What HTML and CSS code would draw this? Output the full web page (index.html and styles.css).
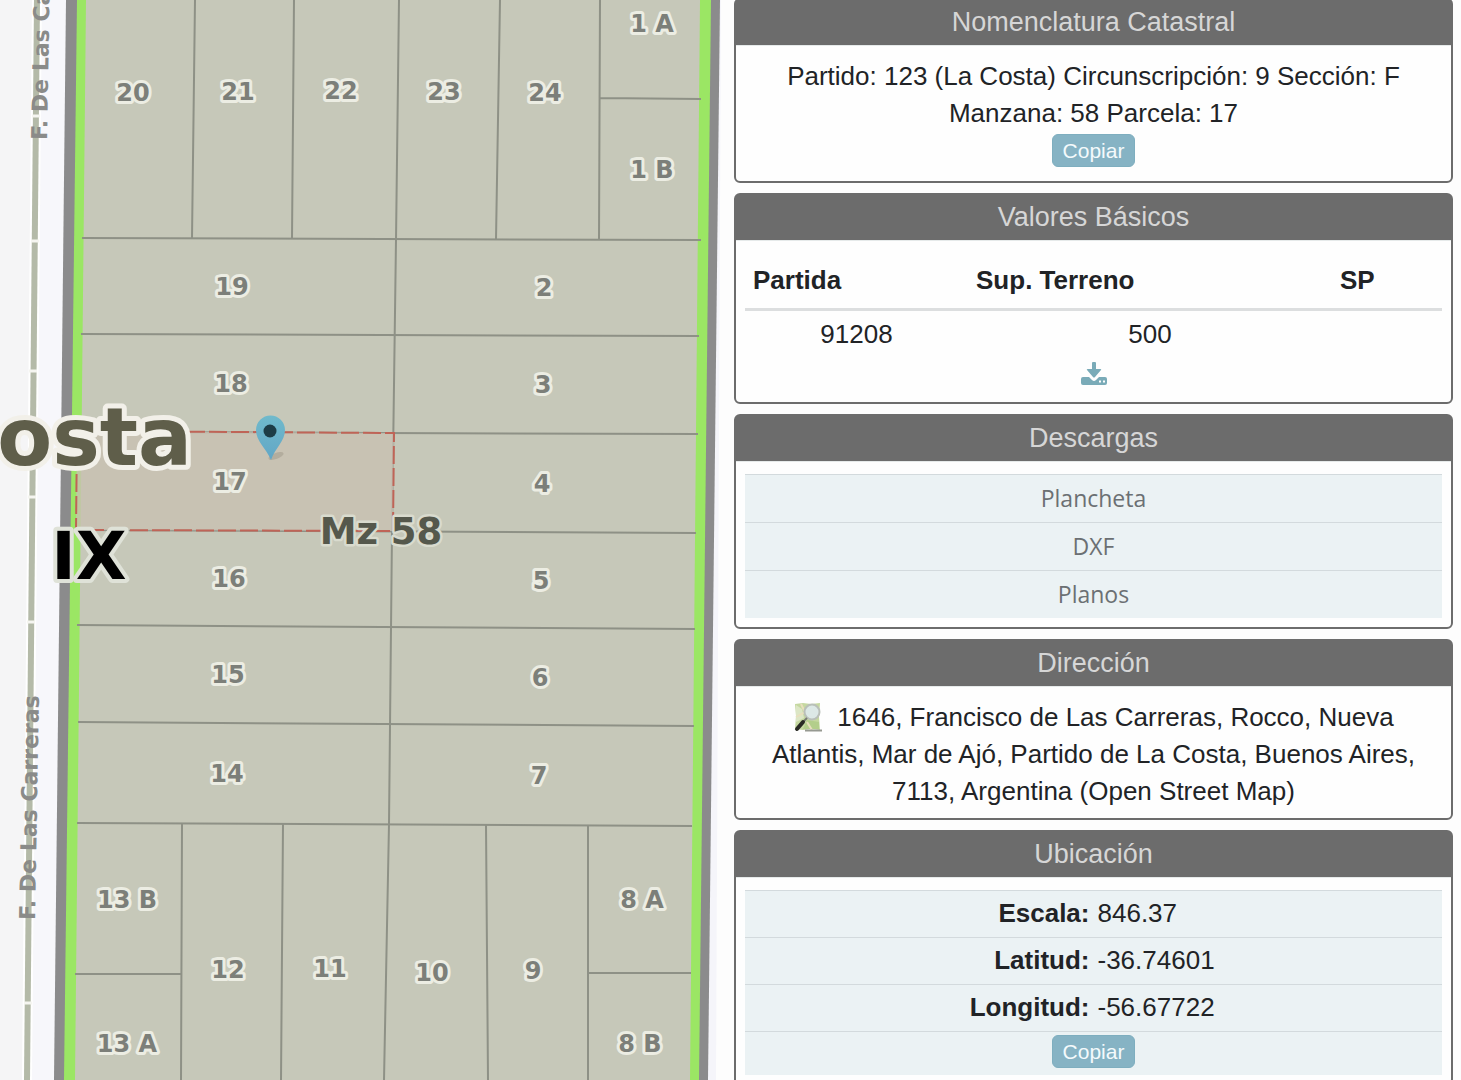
FILE: index.html
```html
<!DOCTYPE html>
<html lang="es">
<head>
<meta charset="utf-8">
<meta name="viewport" content="width=device-width, initial-scale=1">
<title>Carto - Parcela 17</title>
<link rel="stylesheet" href="styles.css">
</head>
<body>
<div class="layout">
  <main class="map">
    <svg class="map-canvas" viewBox="0 0 725 1080" preserveAspectRatio="xMinYMin slice" role="img" aria-label="Mapa catastral de la manzana 58">
      <rect width="725" height="1080" fill="#f5f5f6"/>
      <path d="M42 0H66L54 1080H32Z" fill="#f7f7fb"/>
      <path d="M719 0H725V1080H707Z" fill="#f5f5fa"/>
      <path d="M721 0H725V1080H716Z" fill="#fdfdfd"/>
      <!-- street axis -->
      <path d="M37 0L27 1080" stroke="#fff" stroke-width="10"/>
      <path d="M37 0L27 1080" stroke="#b4baa8" stroke-width="6"/>
      <path class="ticks" d="M32 116h8M31 241h8M29 371h8M28 497h8M27 622h8M24 1003h8"/>
      <!-- block -->
      <path d="M66 0H720L708 1080H54Z" fill="#8b8b8c"/>
      <path d="M77 0H711L699 1080H64Z" fill="#9be664"/>
      <path d="M86 0H700L690 1080H75Z" fill="#c6c8b9"/>
      <g class="parcel-lines">
        <path d="M82 238L701 240M81 334L699 336M79 432L698 434M77 530L696 533M77 625L695 629M78 722L694 726M77 823L692 826"/>
        <path d="M399 0L396 240L392 531L389 824L384 1080"/>
        <path d="M195 0L192 238M294 0L292 238M500 0L496 239M600 0L599 239M600 98L701 99"/>
        <path d="M182 824L181 1080M283 824L281 1080M486 825L488 1080M588 825L588 1080M75 974H182M588 973H691"/>
      </g>
      <path class="selected" d="M77 431L394 433L393 531L76 530Z"/>
      <g class="street">
        <text transform="translate(35 920) rotate(-89)">F. De Las Carreras</text>
        <text transform="translate(47 140) rotate(-89)">F. De Las Carreras</text>
      </g>
      <g class="parcel">
        <text x="133" y="101">20</text><text x="238" y="100">21</text><text x="341" y="99">22</text><text x="444" y="100">23</text><text x="545" y="101">24</text>
        <text x="652" y="32">1 A</text><text x="652" y="178">1 B</text>
        <text x="232" y="295">19</text><text x="544" y="296">2</text>
        <text x="231" y="392">18</text><text x="543" y="393">3</text>
        <text x="230" y="490">17</text><text x="542" y="492">4</text>
        <text x="229" y="587">16</text><text x="541" y="589">5</text>
        <text x="228" y="683">15</text><text x="540" y="686">6</text>
        <text x="227" y="782">14</text><text x="539" y="784">7</text>
        <text x="127" y="908">13 B</text><text x="127" y="1052">13 A</text>
        <text x="228" y="978">12</text><text x="330" y="977">11</text><text x="432" y="981">10</text><text x="533" y="979">9</text>
        <text x="642" y="908">8 A</text><text x="640" y="1052">8 B</text>
      </g>
      <text class="block-name" x="381" y="544">Mz 58</text>
      <text class="district" x="192" y="465">osta</text>
      <text class="section" x="89" y="579">IX</text>
      <defs>
        <linearGradient id="pin" x1="0" y1="0" x2="0" y2="1"><stop offset="0" stop-color="#70bacb"/><stop offset="1" stop-color="#62a6c6"/></linearGradient>
      </defs>
      <ellipse cx="276" cy="456" rx="8" ry="3" fill="#a59e90" opacity=".6" transform="rotate(-20 276 456)"/>
      <path d="M271 460C266 448 256 441 256 430A14.500 14.500 0 0 1 285 430C285 441 275 448 271 460Z" fill="url(#pin)"/>
      <circle cx="270" cy="431" r="6.500" fill="#1d3c46"/>
    </svg>
  </main>
  <aside class="info">
    <section class="card">
      <h2 class="card-title">Nomenclatura Catastral</h2>
      <div class="card-body">
        <p class="text">Partido: 123 (La Costa) Circunscripción: 9 Sección: F Manzana: 58 Parcela: 17</p>
        <button class="copy" type="button">Copiar</button>
      </div>
    </section>
    <section class="card">
      <h2 class="card-title">Valores Básicos</h2>
      <div class="card-body">
        <table class="values">
          <thead><tr><th class="col-id" scope="col">Partida</th><th scope="col">Sup. Terreno</th><th class="col-sp" scope="col">SP</th></tr></thead>
          <tbody><tr><td>91208</td><td>500</td><td></td></tr></tbody>
        </table>
        <a class="download" href="#" aria-label="Descargar">
          <svg width="26" height="24" viewBox="0 0 26 24"><path d="M11 1q0-1 1-1h2q1 0 1 1v6h4q2 0 1 1l-6 7q-1 1-2 0L6 8q-1-1 1-1h4Z"/><path fill-rule="evenodd" d="M2 15h6l3 3q2 2 4 0l3-3h6q2 0 2 2v4q0 2-2 2H2q-2 0-2-2v-4q0-2 2-2ZM18 18.500v2h2v-2ZM22 18.500v2h2v-2Z"/></svg>
        </a>
      </div>
    </section>
    <section class="card">
      <h2 class="card-title">Descargas</h2>
      <div class="card-body">
        <ul class="downloads">
          <li><a href="#">Plancheta</a></li>
          <li><a href="#">DXF</a></li>
          <li><a href="#">Planos</a></li>
        </ul>
      </div>
    </section>
    <section class="card">
      <h2 class="card-title">Dirección</h2>
      <div class="card-body">
        <p class="text"><svg class="osm" width="30" height="30" viewBox="0 0 30 30" aria-hidden="true"><path d="M2 2l8-1 8 1 9-1-1 14 1 13-9-1-8 1-8-1 1-13Z" fill="#c5d8a0"/><path d="M3 3l6 4 2 9-8 4Z" fill="#dce6c5"/><path d="M10 27l4-9 12 2v7Z" fill="#b3ce8b"/><path d="M8 2l4 8-9 5M14 20l5 8" stroke="#e8dfbd" stroke-width="2" fill="none"/><path d="M12 28.500h17" stroke="#969991" stroke-width="2"/><circle cx="19" cy="10" r="7.500" fill="#dce8e6" stroke="#b9bfb9" stroke-width="2"/><path d="M14 16l-4 4" stroke="#777a72" stroke-width="2"/><path d="M10 20l-6 7" stroke="#292a24" stroke-width="4" stroke-linecap="round"/></svg>1646, Francisco de Las Carreras, Rocco, Nueva Atlantis, Mar de Ajó, Partido de La Costa, Buenos Aires, 7113, Argentina (Open Street Map)</p>
      </div>
    </section>
    <section class="card">
      <h2 class="card-title">Ubicación</h2>
      <div class="card-body">
        <dl class="location">
          <div class="pair"><dt>Escala:</dt><dd>846.37</dd></div>
          <div class="pair"><dt>Latitud:</dt><dd>-36.74601</dd></div>
          <div class="pair"><dt>Longitud:</dt><dd>-56.67722</dd></div>
        </dl>
        <div class="location-action"><button class="copy" type="button">Copiar</button></div>
      </div>
    </section>
  </aside>
</div>
</body>
</html>
```
FILE: styles.css
```css
* { box-sizing: border-box; }
body {
  margin: 0;
  background: #fdfdfd;
  color: #212326;
  font: 26px/37px "Liberation Sans", Arial, sans-serif;
}
.layout {
  display: grid;
  grid-template-columns: minmax(0, 725fr) minmax(0, 736fr);
  height: 100vh;
  overflow: hidden;
}
.map { min-width: 0; overflow: hidden; }
.map-canvas { display: block; width: 100%; height: 100%; }
.map-canvas text {
  font-family: "DejaVu Sans", sans-serif;
  font-weight: bold;
  paint-order: stroke;
  stroke-linejoin: round;
}
.ticks { stroke: #f5f5f0; stroke-width: 3; }
.parcel-lines { fill: none; stroke: #8e9186; stroke-width: 2; }
.selected {
  fill: #c8c0b1;
  fill-opacity: .8;
  stroke: #bf6457;
  stroke-width: 2;
  stroke-dasharray: 18 4;
}
.parcel { font-size: 24px; fill: #7c7f79; stroke: #ecede3; stroke-width: 6px; text-anchor: middle; }
.street { font-size: 22px; fill: #8a8b89; }
.block-name { font-size: 37px; fill: #55584c; stroke: #d9dbce; stroke-width: 5px; text-anchor: middle; }
.district { font-size: 80px; fill: #5f5e4a; stroke: #f2f0e9; stroke-width: 10px; text-anchor: end; }
.section { font-size: 66px; fill: #000; stroke: #dfe2d8; stroke-width: 8px; text-anchor: middle; }

.info {
  display: flex;
  flex-direction: column;
  gap: 10px;
  margin-top: -2px;
  padding: 0 8px 0 9px;
  overflow: hidden;
}
.card {
  flex: none;
  border: 2px solid #6c6c6c;
  border-radius: 6px;
  background: #fefefe;
  text-align: center;
}
.card-title {
  margin: 0;
  padding: 4px 0;
  border-bottom: 1px solid #e6eaea;
  background: #6c6c6c;
  color: #d6d6d6;
  font-size: 27px;
  font-weight: normal;
}
.card-body { padding: 12px 9px 8px; }
.text { margin: 0 8px; }
.copy {
  display: block;
  margin: 2px auto 6px;
  padding: 0 10px;
  border: 1px solid #7eaebf;
  border-radius: 6px;
  background: #86b3c4;
  color: #f4fafc;
  font: 21px/31px "Liberation Sans", Arial, sans-serif;
}
.values { width: 100%; border-collapse: collapse; table-layout: fixed; }
.values th { padding: 9px 8px; border-bottom: 3px solid #dcdedf; text-align: left; }
.values td { padding: 5px 8px 0; }
.col-id { width: 32%; }
.col-sp { width: 110px; }
.download { display: block; height: 41px; padding-top: 9px; }
.download svg { display: block; margin: 0 auto; fill: #7aabb8; }
.downloads { margin: 0; padding: 0 0 1px; list-style: none; }
.downloads li { border-top: 1px solid #d3dadd; background: #ebf2f4; }
.downloads a {
  display: block;
  padding: 5px 0;
  color: #6b7073;
  font-family: "Open Sans", "Noto Sans", sans-serif;
  font-size: 23px;
  font-weight: 500;
  text-decoration: none;
}
.osm { margin-right: 14px; vertical-align: -6px; }
.location { margin: 0; }
.pair {
  display: grid;
  grid-template-columns: 1fr 1fr;
  gap: 8px;
  padding: 4px 0 5px;
  border-top: 1px solid #d3dadd;
  background: #ebf2f4;
}
.pair dt { font-weight: bold; text-align: right; }
.pair dd { margin: 0; text-align: left; }
.location-action { padding: 1px 0; border-top: 1px solid #d3dadd; background: #ebf2f4; }
```
